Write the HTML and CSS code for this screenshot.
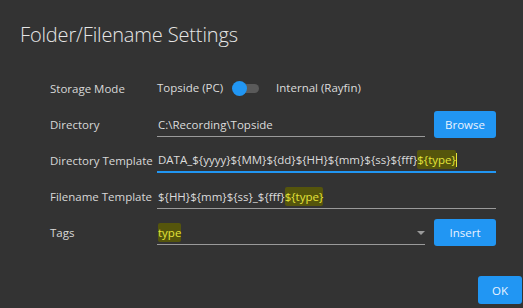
FILE: index.html
```html
<!DOCTYPE html>
<html>
<head>
<meta charset="utf-8">
<link rel="stylesheet" href="styles.css">
</head>
<body>
<div class="dialog">
  <h1 class="title">Folder/Filename Settings</h1>
  <div class="form">
    <div class="label">Storage Mode</div>
    <div class="mode">
      <span>Topside (PC)</span>
      <span class="toggle"><span class="knob"></span></span>
      <span>Internal (Rayfin)</span>
    </div>

    <div class="label">Directory</div>
    <div class="field"><span>C:\Recording\Topside</span></div>
    <button class="btn">Browse</button>

    <div class="label">Directory Template</div>
    <div class="field wide focused"><span>DATA_${yyyy}${MM}${dd}${HH}${mm}${ss}${fff}<mark class="hl">${type}</mark><span class="caret"></span></span></div>

    <div class="label">Filename Template</div>
    <div class="field wide"><span>${HH}${mm}${ss}_${fff}<mark class="hl">${type}</mark></span></div>

    <div class="label">Tags</div>
    <div class="field select"><span><mark class="hl">type</mark></span><span class="arrow"></span></div>
    <button class="btn">Insert</button>
  </div>
  <div class="footer"><button class="btn ok">OK</button></div>
</div>
</body>
</html>
```
FILE: styles.css
```css
html, body {
  margin: 0;
  padding: 0;
  background: #333333;
}
body {
  width: 523px;
  height: 308px;
  overflow: hidden;
  font-family: "Open Sans", "Noto Sans", sans-serif;
  color: #dcdcdc;
}
.dialog {
  display: flex;
  flex-direction: column;
  height: 308px;
}
.title {
  margin: 0;
  padding: 20px 0 0 20px;
  height: 50px;
  box-sizing: border-box;
  font-weight: 300;
  font-size: 20px;
  line-height: 30px;
  color: #e6e6e6;
  letter-spacing: -0.15px;
}
.form {
  display: grid;
  grid-template-columns: 98px 268px 62px;
  grid-template-rows: repeat(5, 36px);
  column-gap: 9px;
  padding: 20px 0 0 50px;
  align-items: center;
  font-size: 11.5px;
}
.label {
  color: #d8d8d8;
  line-height: 16px;
  padding-top: 1px;
  white-space: nowrap;
}
.mode {
  grid-column: 2 / 4;
  display: flex;
  align-items: center;
  line-height: 16px;
  color: #dcdcdc;
}
.toggle {
  position: relative;
  width: 26px;
  height: 9px;
  border-radius: 5px;
  background: #5a5a5a;
  margin: 0 17px 0 10px;
}
.knob {
  position: absolute;
  left: -1px;
  top: -3px;
  width: 15px;
  height: 15px;
  border-radius: 50%;
  background: #2196f3;
}
.field {
  height: 26px;
  box-sizing: border-box;
  border-bottom: 1px solid #9a9a9a;
  display: flex;
  align-items: flex-end;
  justify-content: space-between;
  padding: 0 0 3px 1px;
  line-height: 16px;
  color: #dcdcdc;
  white-space: nowrap;
}
.field.wide {
  grid-column: 2 / 4;
}
.field.focused {
  border-bottom: 2px solid #2196f3;
  padding-bottom: 3px;
}
.hl {
  background: #55550c;
  color: #e4e43a;
  padding: 2px 0;
  border-radius: 2px;
}
.caret {
  display: inline-block;
  width: 1px;
  height: 14px;
  background: #e4e43a;
  vertical-align: -3px;
}
.arrow {
  width: 0;
  height: 0;
  border-left: 4px solid transparent;
  border-right: 4px solid transparent;
  border-top: 4px solid #9a9a9a;
  margin: 0 0 6px 0;
}
.btn {
  font-family: inherit;
  font-size: 11.5px;
  border: none;
  border-radius: 3px;
  background: #2196f3;
  color: #eaf3ff;
  height: 27px;
  padding: 0;
  width: 62px;
  align-self: end;
  margin-bottom: 4px;
}
.footer {
  margin-top: auto;
  display: flex;
  justify-content: flex-end;
  padding: 0 1px 4px 0;
}
.btn.ok {
  width: 44px;
  height: 28px;
  margin: 0;
}
```
